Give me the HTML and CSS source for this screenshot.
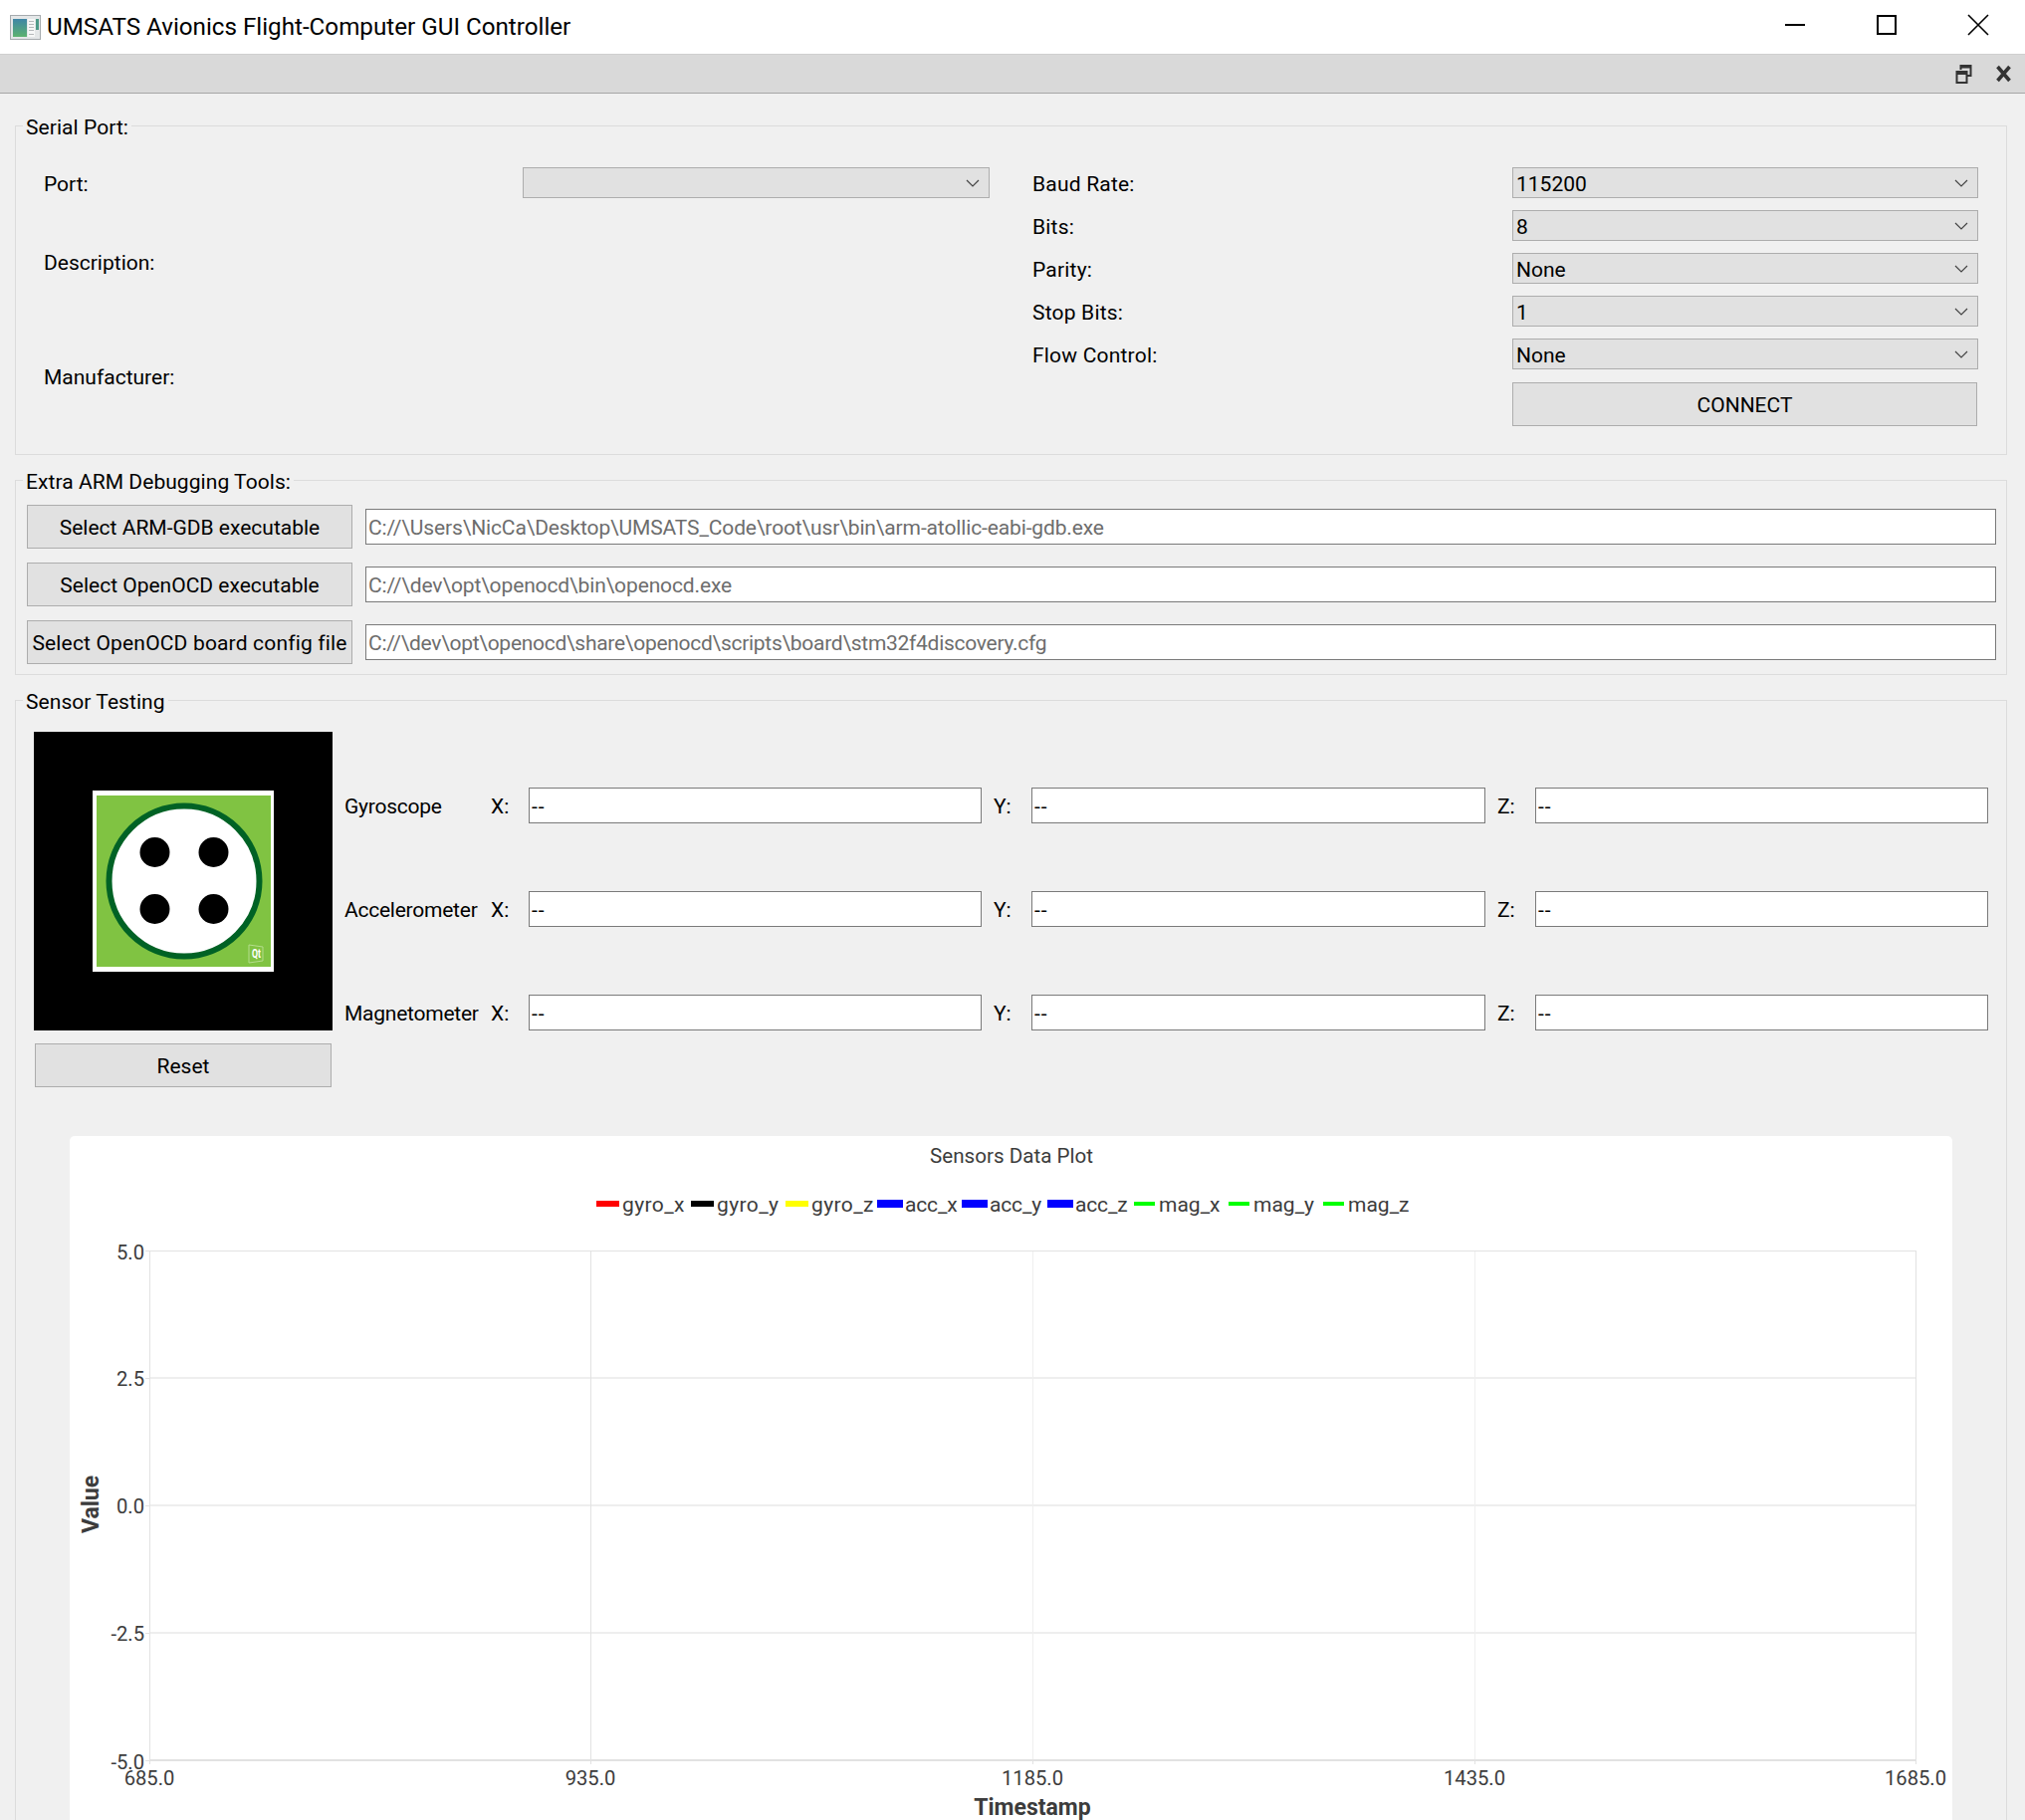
FILE: index.html
```html
<!DOCTYPE html>
<html lang="en">
<head>
<meta charset="utf-8">
<title>UMSATS Avionics Flight-Computer GUI Controller</title>
<link rel="stylesheet" href="styles.css">
</head>
<body>
<header class="titlebar">
  <svg class="app-icon" viewBox="0 0 31 25" aria-hidden="true">
    <defs><linearGradient id="appg" x1="0" y1="0" x2="0" y2="1"><stop offset="0" stop-color="#3f86a6"/><stop offset="1" stop-color="#5cb26f"/></linearGradient></defs>
    <rect x="0.5" y="0.5" width="30" height="24" fill="#e4e7e8" stroke="#a6abae"/>
    <rect x="3" y="4" width="14" height="18" fill="url(#appg)"/>
    <rect x="18" y="4" width="7" height="18" fill="#f6f7f7"/>
    <rect x="19" y="6" width="5" height="1" fill="#b5b9bb"/><rect x="19" y="9" width="5" height="1" fill="#b5b9bb"/><rect x="19" y="12" width="5" height="1" fill="#b5b9bb"/><rect x="19" y="15" width="5" height="1" fill="#b5b9bb"/><rect x="19" y="19" width="5" height="1" fill="#b5b9bb"/>
    <rect x="26" y="4" width="3" height="11" fill="#4d9a88"/>
  </svg>
  <span class="title-text">UMSATS Avionics Flight-Computer GUI Controller</span>
  <div class="win-controls">
    <svg class="win-btn" viewBox="0 0 22 22" aria-hidden="true"><path d="M1 11h20" stroke="#000" stroke-width="2"/></svg>
    <svg class="win-btn" viewBox="0 0 22 22" aria-hidden="true"><rect x="2" y="2" width="18" height="18" fill="none" stroke="#000" stroke-width="2"/></svg>
    <svg class="win-btn" viewBox="0 0 22 22" aria-hidden="true"><path d="M1 1l20 20M21 1L1 21" stroke="#000" stroke-width="1.6" fill="none"/></svg>
  </div>
</header>
<div class="dock-header">
  <svg class="dock-float" viewBox="0 0 16 19" aria-hidden="true"><path d="M5 5V1h10v10h-4" fill="none" stroke="#333" stroke-width="2"/><path d="M5 1h10v2.5H5z" fill="#333"/><rect x="1" y="7" width="10" height="11" fill="none" stroke="#333" stroke-width="2"/><rect x="1" y="7" width="10" height="3" fill="#333"/></svg>
  <svg class="dock-close" viewBox="0 0 16 18" aria-hidden="true"><path d="M2 2l12 14M14 2L2 16" stroke="#333" stroke-width="3.6" fill="none"/></svg>
</div>
<main class="content">
  <section class="group group-serial">
    <h2 class="group-title">Serial Port:</h2>
    <div class="serial-cols">
      <div class="serial-col">
        <div class="field"><span class="lbl">Port:</span><div class="combo"><span></span><svg class="chev" viewBox="0 0 14 9" aria-hidden="true"><path d="M1 1l6 6 6-6" fill="none" stroke="#444" stroke-width="1.2"/></svg></div></div>
        <div class="field field-desc"><span class="lbl">Description:</span></div>
        <div class="field field-mfr"><span class="lbl">Manufacturer:</span></div>
      </div>
      <div class="serial-col serial-col-right">
        <div class="field"><span class="lbl">Baud Rate:</span><div class="combo"><span>115200</span><svg class="chev" viewBox="0 0 14 9" aria-hidden="true"><path d="M1 1l6 6 6-6" fill="none" stroke="#444" stroke-width="1.2"/></svg></div></div>
        <div class="field"><span class="lbl">Bits:</span><div class="combo"><span>8</span><svg class="chev" viewBox="0 0 14 9" aria-hidden="true"><path d="M1 1l6 6 6-6" fill="none" stroke="#444" stroke-width="1.2"/></svg></div></div>
        <div class="field"><span class="lbl">Parity:</span><div class="combo"><span>None</span><svg class="chev" viewBox="0 0 14 9" aria-hidden="true"><path d="M1 1l6 6 6-6" fill="none" stroke="#444" stroke-width="1.2"/></svg></div></div>
        <div class="field"><span class="lbl">Stop Bits:</span><div class="combo"><span>1</span><svg class="chev" viewBox="0 0 14 9" aria-hidden="true"><path d="M1 1l6 6 6-6" fill="none" stroke="#444" stroke-width="1.2"/></svg></div></div>
        <div class="field"><span class="lbl">Flow Control:</span><div class="combo"><span>None</span><svg class="chev" viewBox="0 0 14 9" aria-hidden="true"><path d="M1 1l6 6 6-6" fill="none" stroke="#444" stroke-width="1.2"/></svg></div></div>
        <button class="btn btn-connect" type="button">CONNECT</button>
      </div>
    </div>
  </section>

  <section class="group group-tools">
    <h2 class="group-title">Extra ARM Debugging Tools:</h2>
    <div class="tool-row"><button class="btn btn-tool" type="button">Select ARM-GDB executable</button><input class="path" readonly value="C://\Users\NicCa\Desktop\UMSATS_Code\root\usr\bin\arm-atollic-eabi-gdb.exe"></div>
    <div class="tool-row"><button class="btn btn-tool" type="button">Select OpenOCD executable</button><input class="path" readonly value="C://\dev\opt\openocd\bin\openocd.exe"></div>
    <div class="tool-row"><button class="btn btn-tool btn-wide" type="button">Select OpenOCD board config file</button><input class="path path-tight" readonly value="C://\dev\opt\openocd\share\openocd\scripts\board\stm32f4discovery.cfg"></div>
  </section>

  <section class="group group-sensor">
    <h2 class="group-title">Sensor Testing</h2>
    <div class="sensor-top">
      <div class="sensor-left">
        <div class="logo-box">
          <svg class="logo" viewBox="0 0 182 182" aria-hidden="true">
            <rect width="182" height="182" fill="#fff"/>
            <rect x="4" y="5" width="175" height="172" fill="#80c342"/>
            <ellipse cx="92" cy="91" rx="75.5" ry="75.5" fill="#fff" stroke="#006225" stroke-width="6"/>
            <circle cx="62.5" cy="62" r="15" fill="#000"/><circle cx="121.5" cy="62" r="15" fill="#000"/>
            <circle cx="62.5" cy="119" r="15" fill="#000"/><circle cx="121.5" cy="119" r="15" fill="#000"/>
            <path d="M157 155l14 2v14l-14 2z" fill="#80c342" stroke="#b4dc8c"/>
            <text x="160" y="168" class="qt-mark" textLength="9" lengthAdjust="spacingAndGlyphs">Qt</text>
          </svg>
        </div>
        <button class="btn btn-reset" type="button">Reset</button>
      </div>
      <div class="sensor-grid">
        <span class="lbl sensor-name">Gyroscope</span><span class="lbl">X:</span><input class="val" readonly value="--"><span class="lbl axis-yz">Y:</span><input class="val" readonly value="--"><span class="lbl axis-yz">Z:</span><input class="val" readonly value="--">
        <span class="lbl sensor-name">Accelerometer</span><span class="lbl">X:</span><input class="val" readonly value="--"><span class="lbl axis-yz">Y:</span><input class="val" readonly value="--"><span class="lbl axis-yz">Z:</span><input class="val" readonly value="--">
        <span class="lbl sensor-name">Magnetometer</span><span class="lbl">X:</span><input class="val" readonly value="--"><span class="lbl axis-yz">Y:</span><input class="val" readonly value="--"><span class="lbl axis-yz">Z:</span><input class="val" readonly value="--">
      </div>
    </div>
    <div class="chart-card">
      <svg class="chart" viewBox="70 1141 1891 687" aria-label="Sensors Data Plot">
        <path class="grid-h" d="M150 1384H1925M150 1512H1925M150 1640H1925"/>
        <path class="grid-v" d="M1037.5 1256V1768M1481.5 1256V1768"/>
        <path class="axis" d="M150 1256.5H1925M150.5 1256V1772M593.5 1256V1772M1037.5 1768V1772M1481.5 1768V1772M1924.5 1256V1772M146 1256.5H150M146 1384.5H150M146 1512.5H150M146 1640.5H150M146 1768.5H150"/>
        <path class="axis-bottom" d="M150 1768H1925"/>

        <text class="ch-text ch-title" x="1016" y="1168" text-anchor="middle">Sensors Data Plot</text>

        <rect x="599" y="1206" width="23" height="6" fill="#ff0000"/><text class="ch-text ch-gyro" x="625" y="1217">gyro_x</text>
        <rect x="694" y="1206" width="23" height="6" fill="#000000"/><text class="ch-text ch-gyro" x="720" y="1217">gyro_y</text>
        <rect x="789" y="1206" width="23" height="6" fill="#ffff00"/><text class="ch-text ch-gyro" x="815" y="1217">gyro_z</text>
        <rect x="881" y="1205" width="26" height="8" fill="#0000ff"/><text class="ch-text ch-acc" x="909" y="1217">acc_x</text>
        <rect x="966" y="1205" width="26" height="8" fill="#0000ff"/><text class="ch-text ch-acc" x="994" y="1217">acc_y</text>
        <rect x="1052" y="1205" width="26" height="8" fill="#0000ff"/><text class="ch-text ch-acc" x="1080" y="1217">acc_z</text>
        <rect x="1139" y="1207" width="21" height="4" fill="#00ff00"/><text class="ch-text" x="1164" y="1217">mag_x</text>
        <rect x="1234" y="1207" width="21" height="4" fill="#00ff00"/><text class="ch-text" x="1259" y="1217">mag_y</text>
        <rect x="1329" y="1207" width="21" height="4" fill="#00ff00"/><text class="ch-text" x="1354" y="1217">mag_z</text>

        <text class="ch-text ch-tick" x="145" y="1265" text-anchor="end">5.0</text>
        <text class="ch-text ch-tick" x="145" y="1392" text-anchor="end">2.5</text>
        <text class="ch-text ch-tick" x="145" y="1520" text-anchor="end">0.0</text>
        <text class="ch-text ch-tick" x="145" y="1648" text-anchor="end">-2.5</text>
        <text class="ch-text ch-tick" x="145" y="1777" text-anchor="end">-5.0</text>

        <text class="ch-text ch-tick" x="150" y="1793" text-anchor="middle">685.0</text>
        <text class="ch-text ch-tick" x="593" y="1793" text-anchor="middle">935.0</text>
        <text class="ch-text ch-tick" x="1037" y="1793" text-anchor="middle">1185.0</text>
        <text class="ch-text ch-tick" x="1481" y="1793" text-anchor="middle">1435.0</text>
        <text class="ch-text ch-tick" x="1924" y="1793" text-anchor="middle">1685.0</text>

        <text class="ch-bold" x="1037" y="1823" text-anchor="middle">Timestamp</text>
        <text class="ch-bold" x="0" y="0" text-anchor="middle" transform="translate(99 1511) rotate(-90)">Value</text>
      </svg>
    </div>
  </section>
</main>
</body>
</html>
```

FILE: styles.css
```css
* { box-sizing: border-box; }
html, body { margin: 0; padding: 0; }
body {
  width: 2034px;
  height: 1828px;
  overflow: hidden;
  background: #f0f0f0;
  color: #000;
  font-family: Roboto, "Liberation Sans", sans-serif;
  font-size: 21px;
}
.titlebar {
  display: flex;
  align-items: center;
  height: 55px;
  background: #fff;
  border-bottom: 1px solid #cfcfcf;
  padding-left: 10px;
}
.app-icon { width: 31px; height: 25px; margin-right: 6px; flex: none; }
.title-text { font-size: 24.2px; line-height: 1; }
.win-controls {
  margin-left: auto;
  display: flex;
  gap: 70px;
  padding-right: 36px;
  margin-bottom: 4px;
}
.win-btn { width: 22px; height: 22px; display: block; }
.dock-header {
  display: flex;
  align-items: center;
  justify-content: flex-end;
  height: 39px;
  background: #d9d9d9;
  border-bottom: 1px solid #a6a6a6;
  padding-right: 13px;
  gap: 23px;
}
.dock-float { width: 17px; height: 19px; }
.dock-close { width: 17px; height: 18px; }

.content {
  display: flex;
  flex-direction: column;
  padding: 32px 18px 0 15px;
}
.group {
  border: 1px solid #dcdcdc;
  display: flex;
  flex-direction: column;
}
.group-title {
  align-self: flex-start;
  margin: -14px 0 0 7px;
  padding: 1px 3px 0;
  height: 28px;
  line-height: 28px;
  font-size: 21px;
  font-weight: 400;
  letter-spacing: 0.06px;
  background: #f0f0f0;
}
.lbl { line-height: 30px; padding-top: 2px; white-space: nowrap; }
.axis-yz { padding-left: 1px; }
.sensor-name { letter-spacing: -0.24px; }

.group-serial { height: 331px; padding: 0 28px 0 28px; }
.group-serial .group-title { margin-left: -21px; margin-bottom: 27px; }
.serial-cols { display: flex; gap: 43px; }
.serial-col { width: 950px; display: flex; flex-direction: column; }
.serial-col-right { gap: 11px; }
.serial-col-right .lbl { letter-spacing: 0.2px; }
.field {
  display: grid;
  grid-template-columns: 481px 1fr;
  align-items: start;
  height: 32px;
}
.serial-col-right .field { grid-template-columns: 482px 1fr; }
.field-desc { margin-top: 47px; }
.field-mfr { margin-top: 83px; }
.combo {
  display: flex;
  align-items: center;
  justify-content: space-between;
  height: 31px;
  background: #e1e1e1;
  border: 1px solid #adadad;
  padding: 2px 9px 0 3px;
}
.chev { width: 14px; height: 9px; flex: none; }
.btn {
  display: block;
  background: #e1e1e1;
  border: 1px solid #adadad;
  border-radius: 0;
  padding: 2px 0 0;
  color: #000;
  font: inherit;
  white-space: nowrap;
}
.btn-connect { height: 44px; margin-left: 482px; width: 467px; margin-top: 1px; }

.group-tools { margin-top: 25px; height: 196px; padding: 0 10px 0 11px; }
.group-tools .group-title { margin-left: -4px; margin-bottom: 10px; }
.tool-row {
  display: flex;
  align-items: center;
  gap: 13px;
  height: 44px;
  margin-bottom: 14px;
}
.btn-tool { width: 327px; height: 44px; flex: none; }
.btn-wide { letter-spacing: 0.17px; }
.path, .val {
  display: block;
  height: 36px;
  background: #fff;
  border: 1px solid #7a7a7a;
  border-radius: 0;
  padding: 2px 1px 0 2px;
  font: inherit;
  outline: none;
  min-width: 0;
}
.path { flex: 1; color: #6d6d6d; letter-spacing: -0.13px; }
.path-tight { letter-spacing: -0.28px; }
.val { width: 100%; color: #000; letter-spacing: 1px; font-variant-ligatures: none; }

.group-sensor { margin-top: 25px; height: 1200px; padding: 0 18px; }
.group-sensor .group-title { margin-left: -11px; margin-bottom: 17px; }
.sensor-top { display: flex; gap: 12px; align-items: flex-start; }
.sensor-left { width: 300px; flex: none; display: flex; flex-direction: column; }
.logo-box {
  width: 300px;
  height: 300px;
  background: #000;
  display: flex;
  align-items: center;
  justify-content: center;
}
.logo { width: 182px; height: 182px; display: block; }
.qt-mark { font-size: 12px; fill: #fff; font-weight: 700; }
.btn-reset { height: 44px; width: 298px; margin: 13px 1px 0; }
.sensor-grid {
  display: grid;
  grid-template-columns: 136px 27px 455px 28px 456px 28px 455px;
  grid-auto-rows: 36px;
  column-gap: 11px;
  row-gap: 68px;
  margin-top: 56px;
  align-items: center;
}

.chart-card {
  width: 1891px;
  height: 700px;
  margin: 49px 0 0 36px;
  background: #fff;
  border-radius: 5px 5px 0 0;
}
.chart { display: block; width: 1891px; height: 687px; }
.grid-h { fill: none; stroke: #eeeeee; stroke-width: 2; }
.grid-v { fill: none; stroke: #efefef; stroke-width: 1; }
.axis { fill: none; stroke: #e2e2e2; stroke-width: 1; }
.axis-bottom { fill: none; stroke: #e2e2e2; stroke-width: 2; }
.ch-text { font-family: Roboto, "Liberation Sans", sans-serif; font-size: 21px; fill: #3c3c3c; }
.ch-title { font-size: 20.6px; }
.ch-gyro { letter-spacing: 0.38px; }
.ch-acc { letter-spacing: -0.15px; }
.ch-tick { font-size: 20.2px; }
.ch-bold { font-family: Roboto, "Liberation Sans", sans-serif; font-size: 23px; font-weight: 700; fill: #3c3c3c; }
```
